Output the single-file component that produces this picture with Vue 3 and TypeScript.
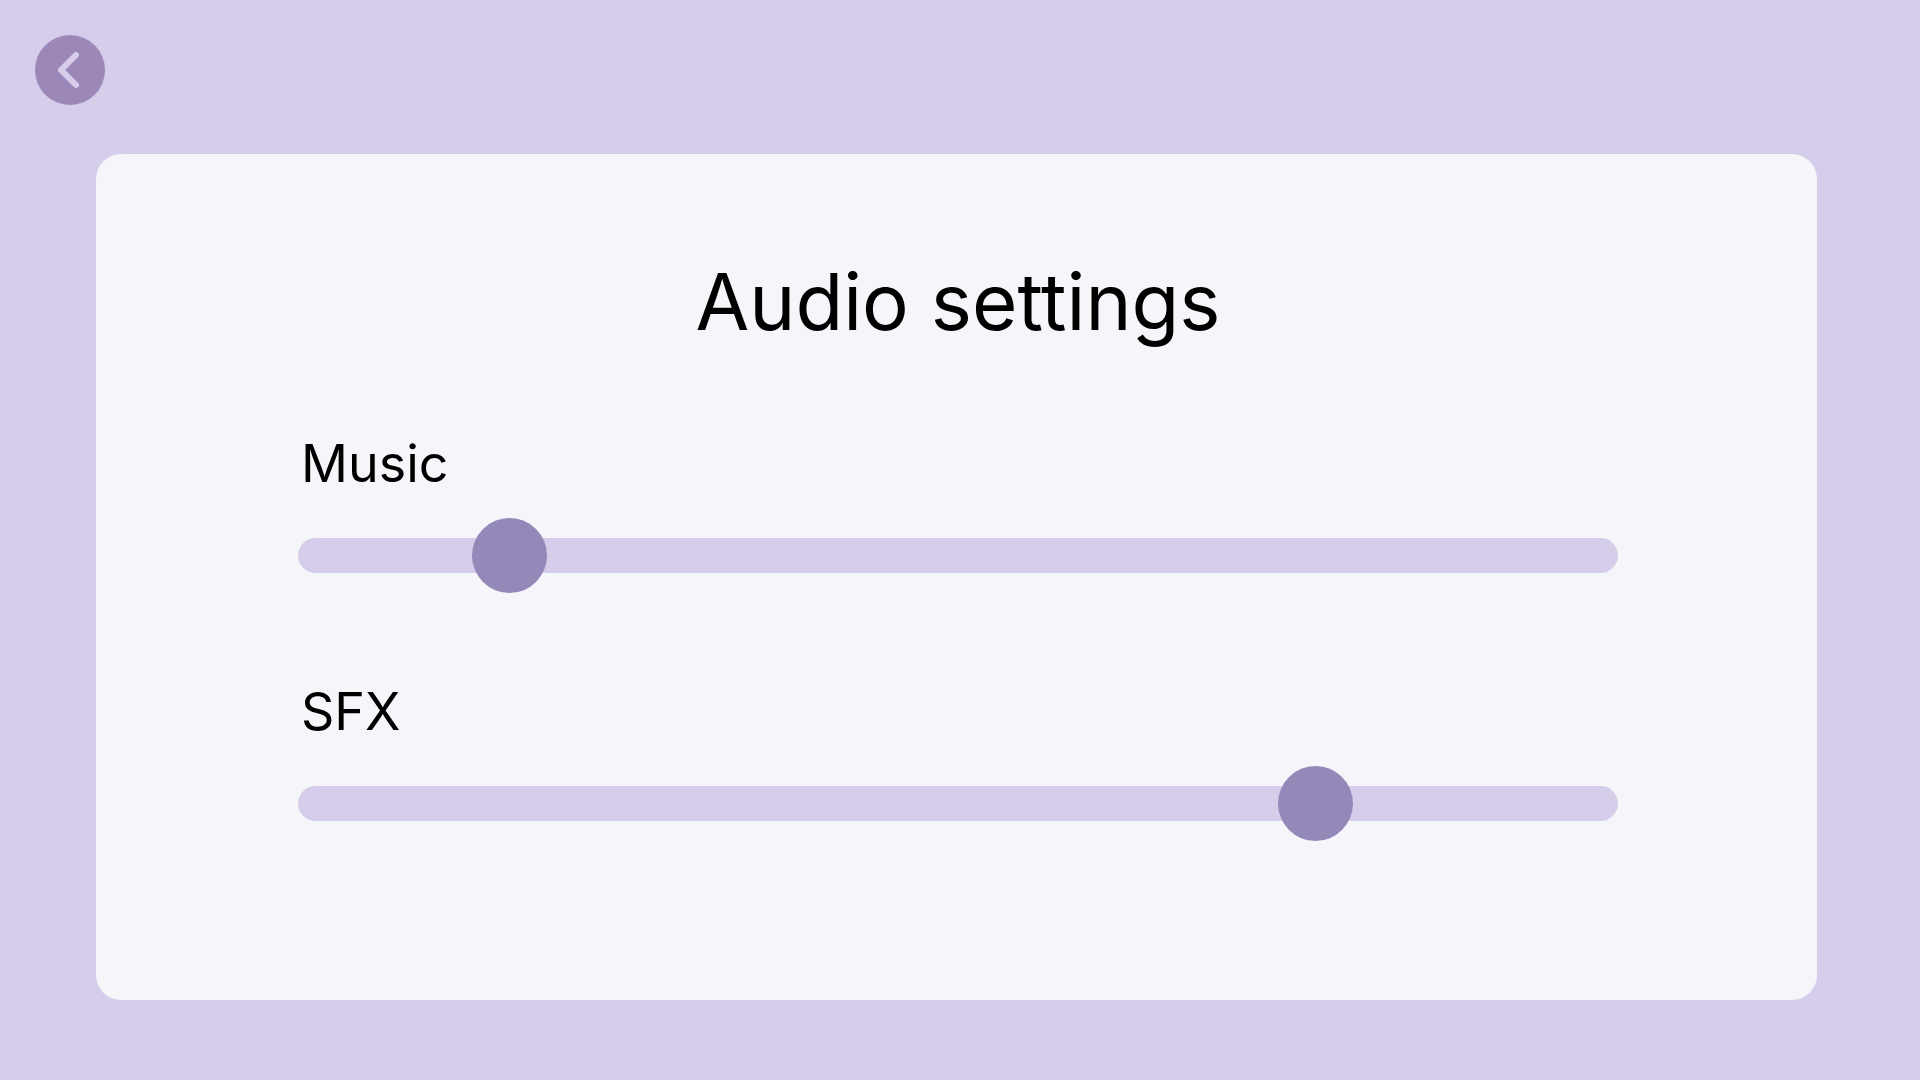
<script setup lang="ts">
import { reactive } from 'vue'

interface Channel {
  id: string
  label: string
  level: number
}

const channels = reactive<Channel[]>([
  { id: 'music', label: 'Music', level: 140 },
  { id: 'sfx', label: 'SFX', level: 787 },
])
</script>

<template>
  <div class="page">
    <header class="topbar">
      <button class="back" type="button" aria-label="Back">
        <svg viewBox="0 0 70 70" aria-hidden="true">
          <path d="M41 20L26 35L41 50" />
        </svg>
      </button>
    </header>

    <main class="card">
      <h1 class="title">Audio settings</h1>
      <div v-for="channel in channels" :key="channel.id" class="channel">
        <label class="label" :for="channel.id">{{ channel.label }}</label>
        <input
          :id="channel.id"
          v-model.number="channel.level"
          class="slider"
          type="range"
          min="0"
          max="1000"
        />
      </div>
    </main>
  </div>
</template>

<style>
body {
  background: #d6cdea;
}
</style>

<style scoped>
.page {
  box-sizing: border-box;
  min-height: 100vh;
  display: flex;
  flex-direction: column;
  padding-bottom: 80px;
  background: #d6cdea;
  color: #000;
  font-family: Inter, Lato, sans-serif;
}

.topbar {
  display: flex;
  padding: 35px 35px 49px;
}

.back {
  width: 70px;
  height: 70px;
  padding: 0;
  border: 0;
  border-radius: 50%;
  background: #9b87b8;
  cursor: pointer;
}

.back svg {
  display: block;
  width: 100%;
  height: 100%;
}

.back path {
  fill: none;
  stroke: #d6cdea;
  stroke-width: 6;
  stroke-linecap: round;
  stroke-linejoin: round;
}

.card {
  flex: 1;
  display: flex;
  flex-direction: column;
  margin: 0 103px 0 96px;
  padding: 98px 199px 80px 202px;
  border-radius: 25px;
  background: #f4f6fa;
}

.title {
  margin: 0 0 80px;
  font-size: 78px;
  font-weight: 400;
  line-height: 100px;
  text-align: center;
}

.channel {
  display: flex;
  flex-direction: column;
  gap: 22px;
}

.channel + .channel {
  margin-top: 87px;
}

.label {
  align-self: flex-start;
  padding-left: 3px;
  font-size: 52px;
  line-height: 64px;
}

.slider {
  appearance: none;
  width: 100%;
  height: 75px;
  margin: 0;
  background: transparent;
  cursor: pointer;
}

.slider::-webkit-slider-runnable-track {
  height: 35px;
  border-radius: 18px;
  background: #d6cdea;
}

.slider::-webkit-slider-thumb {
  appearance: none;
  width: 75px;
  height: 75px;
  margin-top: -20px;
  border-radius: 50%;
  background: #9488b8;
}
</style>
